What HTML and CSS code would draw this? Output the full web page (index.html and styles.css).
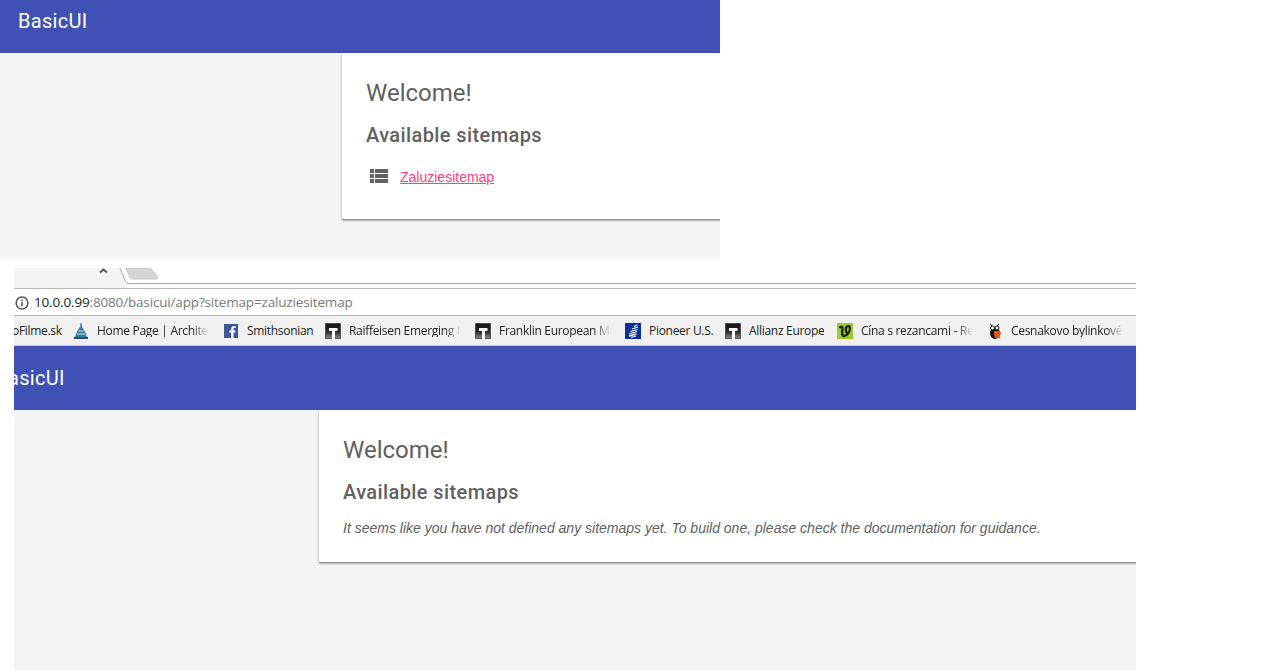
FILE: index.html
```html
<!DOCTYPE html>
<html lang="en">
<head>
<meta charset="utf-8">
<title>BasicUI</title>
<link rel="stylesheet" href="styles.css">
</head>
<body>
<section class="shot shot-top">
  <header class="appbar appbar-top"><span class="brand">BasicUI</span></header>
  <main class="stage stage-top">
    <div class="card card-top">
      <h1>Welcome!</h1>
      <h2>Available sitemaps</h2>
      <div class="sitemap">
        <svg class="list-icon" width="18" height="14" viewBox="0 0 18 14"><path fill="#616161" d="M0 0h4v4H0zM5 0h13v4H5zM0 5h4v4H0zM5 5h13v4H5zM0 10h4v4H0zM5 10h13v4H5z"/></svg>
        <a href="#">Zaluziesitemap</a>
      </div>
    </div>
  </main>
</section>
<section class="shot shot-bottom">
  <svg class="tabstrip" width="1122" height="20" viewBox="0 0 1122 20">
    <path fill="#f5f5f5" d="M0 0H106L113 15.500V20H0z"/>
    <path fill="none" stroke="#555" stroke-width="1.800" d="M86 4.500L89.500 1.500L93 4.500"/>
    <path fill="none" stroke="#a9a9a9" d="M106 0L111.500 13.500Q112.500 15.500 114.500 15.500H1122"/>
    <path fill="#d6d6d6" stroke="#c4c4c4" d="M112 0H136L143.500 8.500Q144 11 141.500 11H119Q116.500 11 115.500 8.500z"/>
  </svg>
  <div class="urlbar">
    <svg class="info" width="14" height="14" viewBox="0 0 14 14"><circle cx="7" cy="7" r="5.900" fill="none" stroke="#555" stroke-width="1.500"/><path fill="#555" d="M6.200 6h1.600v4.400H6.200zM6.200 3.400h1.600V5H6.200z"/></svg>
    <span class="url"><span class="host">10.0.0.99</span>:8080/basicui/app?sitemap=zaluziesitemap</span>
  </div>
  <nav class="bookmarks">
    <span class="bm bm-first"><span class="bm-label">oFilme.sk</span></span>
    <span class="bm bm-wide"><svg width="16" height="16" viewBox="0 0 16 16"><path fill="#3a7ca5" d="M7.500 0h1l.5 4c1 1.500 3 4 5 10H2c2-6 4-8.500 5-10z"/><path fill="#cfe0ea" d="M5.500 7.500h5v1h-5zM4 10.500h8v1H4z"/><path fill="#1f4f6d" d="M1 14h14v2H1z"/></svg><span class="bm-label fade">Home Page | Architect</span></span>
    <span class="bm bm-smith"><svg width="16" height="16" viewBox="0 0 16 16"><path fill="#3b5998" d="M1 1h14v14H1z"/><path fill="#fff" d="M10.500 15V9.500h1.800l.3-2.100h-2.100V6.100c0-.6.2-1 1-1h1.200V3.200c-.2 0-.9-.1-1.700-.1-1.700 0-2.800 1-2.800 2.900v1.400H6.300v2.100h1.900V15z"/></svg><span class="bm-label">Smithsonian</span></span>
    <span class="bm bm-wide"><svg width="16" height="16" viewBox="0 0 16 16"><use href="#t-icon"/></svg><span class="bm-label fade">Raiffeisen Emerging Markets</span></span>
    <span class="bm bm-wide"><svg width="16" height="16" viewBox="0 0 16 16"><use href="#t-icon"/></svg><span class="bm-label fade">Franklin European Mid</span></span>
    <span class="bm bm-pioneer"><svg width="16" height="16" viewBox="0 0 16 16"><path fill="#0a2f9e" d="M0 0h16v16H0z"/><path fill="none" stroke="#fff" stroke-width="1.300" d="M9 3.500L12.500 2M7 6L13 4M5.500 8.500L12.500 6.500M4 11L12 8.500M4 13L11.500 11M6 14.500L11 13"/></svg><span class="bm-label">Pioneer U.S.</span></span>
    <span class="bm bm-allianz"><svg width="16" height="16" viewBox="0 0 16 16"><use href="#t-icon"/></svg><span class="bm-label">Allianz Europe</span></span>
    <span class="bm bm-wide"><svg width="16" height="16" viewBox="0 0 16 16"><path fill="#9ccb2b" d="M0 0h16v16H0z"/><path fill="none" stroke="#1c2416" stroke-width="2.300" d="M2.500 5C4 2.800 6 3.500 5.500 6 5 9 4.500 13 7 13c3 0 6-4 6-7.500 0-3-3.500-3-4-.5-.5 2.500 0 4.500 1.500 5.500"/></svg><span class="bm-label fade">Čína s rezancami - Recept</span></span>
    <span class="bm"><svg width="16" height="16" viewBox="0 0 16 16"><path fill="none" stroke="#111" d="M5 3L3 1M10 3L12 1"/><path fill="#111" d="M3 10c0-3 2-5 5-5s5 2 5 5-2 6-5 6-5-3-5-6z"/><path fill="#e8501a" d="M7 8h6l1.500 3-2.500 1 1.500 3H8l-1-3z"/><circle cx="5.500" cy="5" r="2" fill="#fff" stroke="#111"/><circle cx="10" cy="5" r="2" fill="#fff" stroke="#111"/></svg><span class="bm-label fade">Cesnakovo bylinkové</span></span>
  </nav>
  <svg class="defs" width="0" height="0"><defs><linearGradient id="tg" x1="0" y1="0" x2="0" y2="1"><stop offset="0" stop-color="#111"/><stop offset=".55" stop-color="#2a2a2a"/><stop offset="1" stop-color="#8a8a8a"/></linearGradient><g id="t-icon"><path fill="url(#tg)" stroke="#544e4a" d="M.5.500h15v15H.5z"/><path fill="#fff" d="M4 5h8.500v3H10v8H7V8H4z"/></g></defs></svg>
  <header class="appbar appbar-bottom"><span class="brand brand-clipped">asicUI</span></header>
  <main class="stage stage-bottom">
    <div class="card card-bottom">
      <h1>Welcome!</h1>
      <h2>Available sitemaps</h2>
      <p class="empty">It seems like you have not defined any sitemaps yet. To build one, please check the documentation for guidance.</p>
    </div>
  </main>
</section>
</body>
</html>
```
FILE: styles.css
```css
* { box-sizing: border-box; }
html, body { margin: 0; padding: 0; background: #fff; }
body { width: 1278px; height: 670px; overflow: hidden; font-family: "Liberation Sans", Arial, sans-serif; }

.shot { overflow: hidden; }
.shot-top { width: 720px; height: 259px; }
.shot-bottom { width: 1122px; height: 402px; margin: 9px 0 0 14px; }

.appbar { background: #3f51b5; color: #fff; font-family: Roboto, sans-serif; font-size: 20px; display: flex; }
.appbar-top { height: 53px; padding: 9px 0 0 18px; }
.appbar-bottom { height: 64px; padding-top: 20px; }
.brand { line-height: 24px; letter-spacing: .3px; }
.brand-clipped { margin-left: -6px; }

.stage { background: #f5f5f5; }
.stage-top { height: 206px; padding-left: 342px; }
.stage-bottom { height: 260px; padding-left: 305px; }

.card { background: #fff; box-shadow: 0 2px 2px rgba(0,0,0,.14), 0 1px 3px rgba(0,0,0,.22), 0 1px 1px rgba(0,0,0,.2); padding: 24px; width: 900px; }
.card-top { height: 166px; }
.card-bottom { height: 152px; }

h1 { margin: 0; font: 400 24px/32px Roboto, sans-serif; color: #616161; }
h2 { margin: 12px 0 0; font: 500 20px/28px Roboto, sans-serif; color: #616161; letter-spacing: .4px; }

.sitemap { display: flex; align-items: center; margin-top: 14px; height: 28px; padding-left: 4px; }
.list-icon { flex: none; margin-right: 12px; margin-top: -2px; }
.sitemap a { color: #ff4081; font-size: 14px; text-decoration: underline; }

.empty { margin: 12px 0 0; font-size: 14px; line-height: 20px; font-style: italic; color: #616161; }

.tabstrip { display: block; }

.urlbar { height: 28px; border-top: 1px solid #b5b5b5; border-bottom: 1px solid #b5b5b5; display: flex; align-items: center; gap: 6px; padding: 1px 0 0 1px; background: #fff; font: 400 13.500px/1 "Open Sans", sans-serif; color: #7a7a7a; }
.info { flex: none; }
.host { color: #222; }
.url { white-space: nowrap; letter-spacing: -.16px; margin-left: -1px; }

.bookmarks { height: 30px; background: #f1f1f1; border-bottom: 1px solid #cfcfcf; display: flex; align-items: center; font: 400 12px/1 "Open Sans", sans-serif; letter-spacing: -.3px; color: #222; white-space: nowrap; overflow: hidden; }
.bm { display: flex; align-items: center; gap: 8px; flex: none; }
.bm svg { flex: none; }
.bm-first { width: 61px; margin-left: -2px; }
.bm-wide { width: 150px; }
.bm-smith { width: 102px; }
.bm-pioneer { width: 100px; }
.bm-allianz { width: 112px; }
.bm-label { display: block; overflow: hidden; }
.fade { width: 112px; -webkit-mask-image: linear-gradient(90deg, #000 85%, transparent); mask-image: linear-gradient(90deg, #000 85%, transparent); }
.defs { position: absolute; }
```
